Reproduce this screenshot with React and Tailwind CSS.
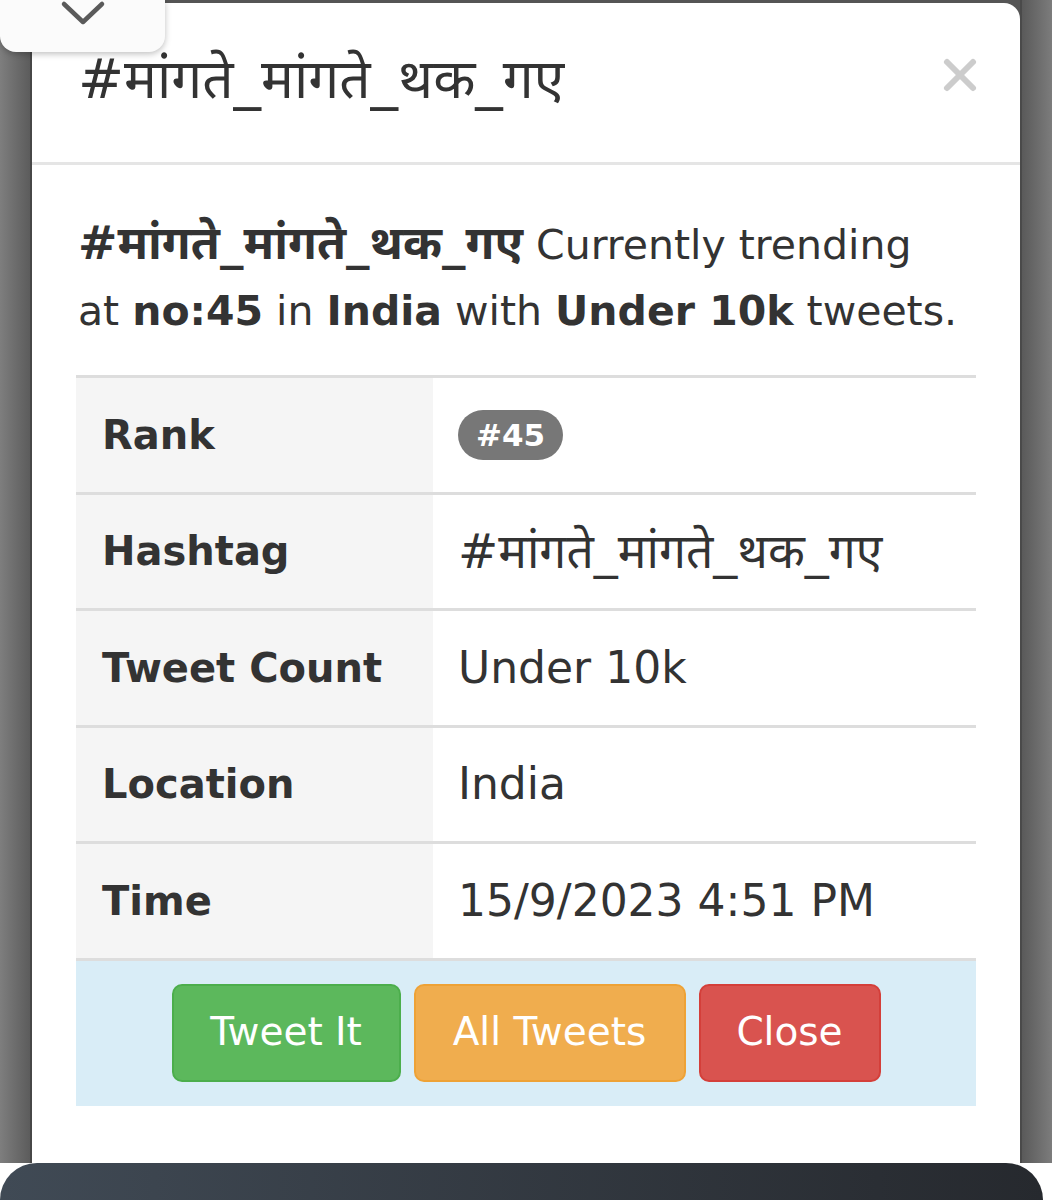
import React from "react";

const font = { fontFamily: '"DejaVu Sans", "Noto Sans Devanagari", "Noto Sans", sans-serif' };

function Row({ label, children }) {
  return (
    <div className="flex h-[116.5px] border-t-[3px] border-[#dddddd]">
      <div className="w-[357px] bg-[#f5f5f5] flex items-center pl-[26px] font-bold text-[40px] text-[#333333]">
        {label}
      </div>
      <div className="flex-1 bg-white flex items-center pl-[25px] text-[44px] text-[#333333]">
        {children}
      </div>
    </div>
  );
}

export default function App() {
  return (
    <div className="relative w-[1052px] h-[1200px] overflow-hidden bg-white" style={font}>
      <div className="flex h-[1163px] bg-[#555555]">
        <div className="w-[32px] h-full bg-gradient-to-r from-[#7e7e7e] to-[#5c5c5c] border-r-[2px] border-[#474747]" />
        <div className="flex-1 mt-[3px] bg-white rounded-tr-[16px] flex flex-col">
          <div className="h-[162px] border-b-[3px] border-[#e5e5e5] flex items-center justify-between pl-[46px] pr-[42px]">
            <div className="text-[55px] text-[#333333] leading-none pb-[6px]">#मांगते_मांगते_थक_गए</div>
            <svg width="36" height="36" viewBox="0 0 36 36" className="mb-[16px]">
              <line x1="5" y1="5" x2="31" y2="31" stroke="#cccccc" strokeWidth="6" strokeLinecap="round" />
              <line x1="31" y1="5" x2="5" y2="31" stroke="#cccccc" strokeWidth="6" strokeLinecap="round" />
            </svg>
          </div>
          <div className="px-[44px] pt-[47px]">
            <p className="text-[41px] leading-[66px] text-[#333333] pl-[2px]">
              <b className="text-[47px] leading-[0]">#मांगते_मांगते_थक_गए</b> Currently trending
              <br />
              at <b>no:45</b> in <b>India</b> with <b>Under 10k</b> tweets.
            </p>
            <div className="mt-[31px] flex flex-col">
              <Row label="Rank">
                <span className="bg-[#777777] text-white font-bold text-[31px] rounded-full px-[18px] h-[50px] flex items-center">#45</span>
              </Row>
              <Row label="Hashtag"><span className="text-[48px]">#मांगते_मांगते_थक_गए</span></Row>
              <Row label="Tweet Count">Under 10k</Row>
              <Row label="Location">India</Row>
              <Row label="Time">15/9/2023 4:51 PM</Row>
              <div className="h-[148px] border-t-[3px] border-[#dddddd] bg-[#d9edf7] flex items-start justify-center gap-[13px] pt-[23px]">
                <button className="w-[229px] h-[98px] rounded-[10px] bg-[#5cb85c] border-[2px] border-[#4cae4c] text-white text-[39px]">Tweet It</button>
                <button className="w-[272px] h-[98px] rounded-[10px] bg-[#f0ad4e] border-[2px] border-[#eea236] text-white text-[39px]">All Tweets</button>
                <button className="w-[182px] h-[98px] rounded-[10px] bg-[#d9534f] border-[2px] border-[#d43f3a] text-white text-[39px]">Close</button>
              </div>
            </div>
          </div>
        </div>
        <div className="w-[32px] h-full bg-gradient-to-r from-[#5a5a5a] to-[#7c7c7c] border-l-[2px] border-[#4a4a4a]" />
      </div>
      <div className="ml-0 mr-[9px] h-[37px] rounded-t-[40px] bg-gradient-to-r from-[#404a55] to-[#26292e]" />
      <div className="absolute left-0 top-0 w-[165px] h-[52px] bg-[#fbfbfb] rounded-br-[16px] rounded-bl-[16px] shadow-[0_2px_6px_rgba(0,0,0,0.25)] flex justify-center">
        <svg width="46" height="28" viewBox="0 0 46 28">
          <polyline points="4,4 23,22 42,4" fill="none" stroke="#5a5a5a" strokeWidth="4.5" strokeLinecap="round" strokeLinejoin="round" />
        </svg>
      </div>
    </div>
  );
}
